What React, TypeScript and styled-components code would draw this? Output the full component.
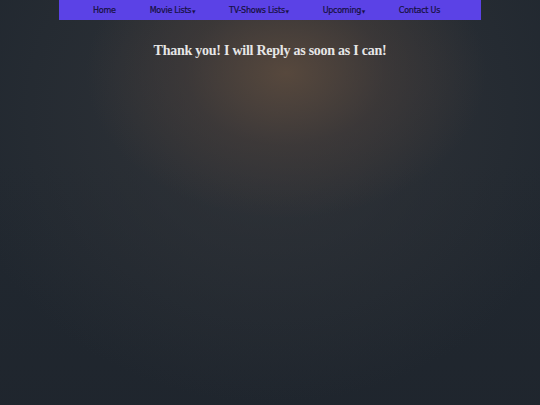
import styled, { createGlobalStyle } from 'styled-components';

const GlobalStyle = createGlobalStyle`
  html, body {
    margin: 0;
    padding: 0;
    height: 100%;
  }
  #root {
    min-height: 100vh;
  }
`;

const Page = styled.div`
  min-height: 100vh;
  background-color: #212830;
  background-image:
    radial-gradient(ellipse 200px 145px at 53% 18%, rgba(94, 76, 62, 0.85), rgba(74, 63, 58, 0.5) 50%, rgba(33, 40, 48, 0) 100%),
    radial-gradient(ellipse 320px 290px at 50% 28%, rgba(52, 54, 58, 0.85), rgba(33, 40, 48, 0) 100%),
    linear-gradient(to bottom, rgba(36, 44, 52, 0) 40%, rgba(30, 36, 44, 0.6) 100%);
  display: flex;
  flex-direction: column;
  align-items: center;
`;

const NavBar = styled.nav`
  width: 422px;
  height: 20px;
  background: #5b42e6;
  display: flex;
  align-items: center;
  gap: 34px;
  padding-left: 34px;
  box-sizing: border-box;
`;

const NavItem = styled.a`
  font-family: 'Comic Sans MS', 'DejaVu Sans', sans-serif;
  font-size: 8px;
  letter-spacing: -0.25px;
  color: #161040;
  text-decoration: none;
  white-space: nowrap;
  cursor: pointer;
  -webkit-text-stroke: 0.2px #161040;
`;

const Caret = styled.span`
  font-size: 4px;
  margin-left: 1px;
`;

const Heading = styled.h1`
  margin: 23px 0 0;
  font-family: 'Liberation Serif', 'Times New Roman', serif;
  font-size: 14px;
  letter-spacing: -0.25px;
  font-weight: bold;
  color: #e6e6e6;
  text-align: center;
`;

const items = [
  { label: 'Home' },
  { label: 'Movie Lists', menu: true },
  { label: 'TV-Shows Lists', menu: true },
  { label: 'Upcoming', menu: true },
  { label: 'Contact Us' },
];

export default function App() {
  return (
    <>
      <GlobalStyle />
      <Page>
        <NavBar>
          {items.map((item) => (
            <NavItem key={item.label}>
              {item.label}
              {item.menu && <Caret>▼</Caret>}
            </NavItem>
          ))}
        </NavBar>
        <Heading>Thank you! I will Reply as soon as I can!</Heading>
      </Page>
    </>
  );
}
